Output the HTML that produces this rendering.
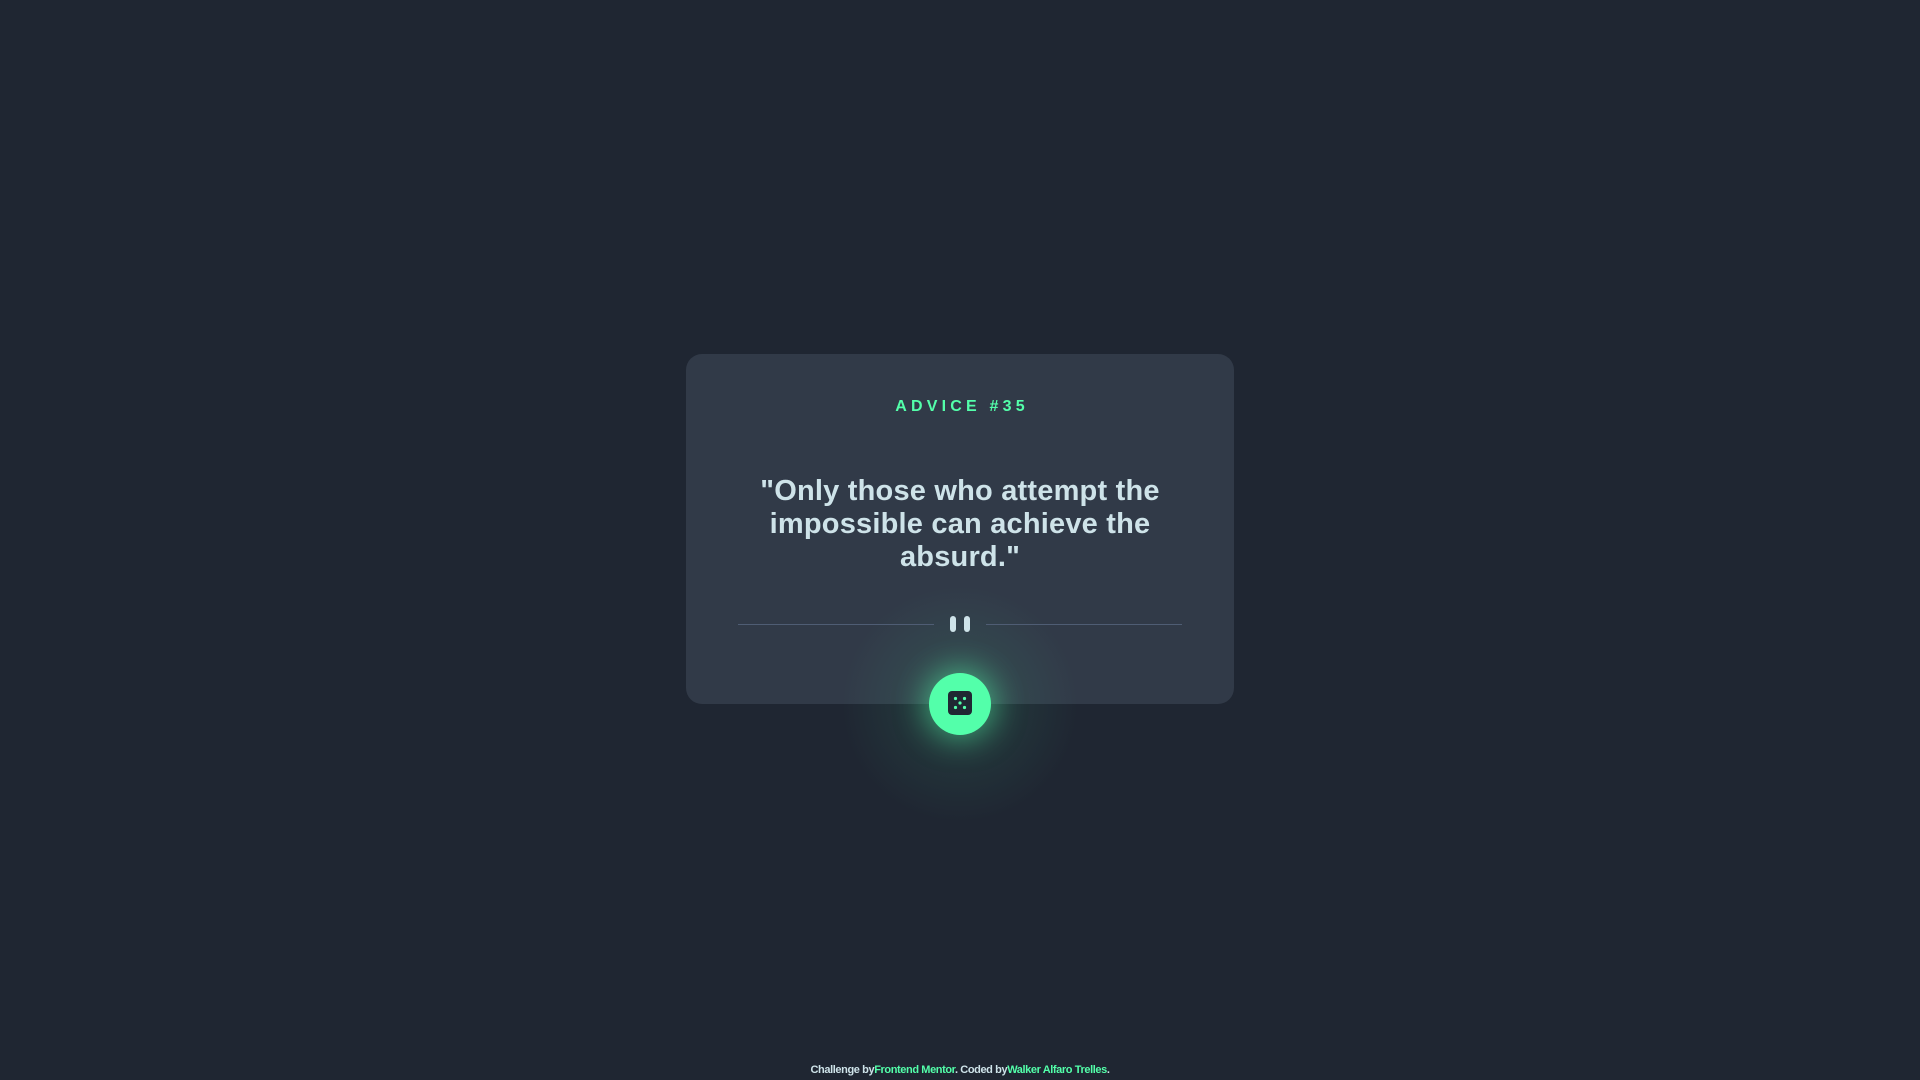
<!DOCTYPE html>
<html><head><meta charset="utf-8"><style>
html,body{margin:0;width:1920px;height:1080px;background:#1f2632;font-family:"Liberation Sans",sans-serif;overflow:hidden}
.card{position:absolute;left:686px;top:354px;width:548px;height:350px;background:#313a48;border-radius:16px}
.lbl{position:absolute;top:398px;left:0;width:1920px;text-align:center;color:#53ffaa;font-weight:bold;font-size:16px;letter-spacing:4.2px;padding-left:4px;box-sizing:border-box}
.q{position:absolute;top:475px;left:716px;width:488px;text-align:center;color:#cee3e9;font-weight:bold;font-size:29px;line-height:33px;letter-spacing:0.2px}
.ln{position:absolute;top:624px;height:1px;background:#4f5d74;width:196px}
.bar{position:absolute;top:616px;width:6px;height:16px;border-radius:3px;background:#cee3e9}
.glow{position:absolute;left:840px;top:584px;width:240px;height:240px;border-radius:50%;background:radial-gradient(circle,rgba(83,255,170,.15) 0%,rgba(83,255,170,.05) 40%,rgba(83,255,170,0) 70%)}
.btn{position:absolute;left:929px;top:673px;width:62px;height:62px;border-radius:50%;background:#53ffaa;box-shadow:0 0 30px 4px rgba(83,255,170,.5)}
.foot{position:absolute;top:1064px;left:0;width:1920px;text-align:center;font-size:11px;font-weight:bold;color:#cee3e9;letter-spacing:-0.4px}
.foot span{color:#53ffaa}
</style></head><body>
<div class="card"></div>
<div class="glow"></div>
<div class="lbl">ADVICE #35</div>
<div class="q">"Only those who attempt the impossible can achieve the absurd."</div>
<div class="ln" style="left:738px"></div><div class="ln" style="left:986px"></div>
<div class="bar" style="left:950px"></div><div class="bar" style="left:964px"></div>
<div class="btn"><svg style="position:absolute;left:19px;top:18px" width="24" height="24" viewBox="0 0 24 24"><rect width="24" height="24" rx="4" fill="#202733"/><g fill="#53ffaa"><circle cx="7.5" cy="7.5" r="1.6"/><circle cx="16.5" cy="7.5" r="1.6"/><circle cx="12" cy="12" r="1.6"/><circle cx="7.5" cy="16.5" r="1.6"/><circle cx="16.5" cy="16.5" r="1.6"/></g></svg></div>
<div class="foot">Challenge by<span>Frontend Mentor</span>. Coded by<span>Walker Alfaro Trelles</span>.</div>
</body></html>
